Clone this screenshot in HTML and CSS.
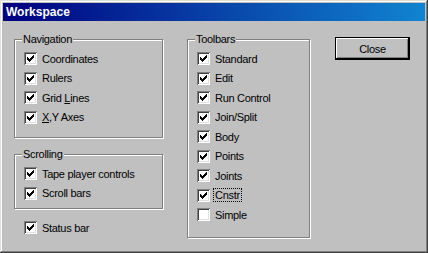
FILE: index.html
```html
<!DOCTYPE html>
<html>
<head>
    <title>Workspace</title>
    <link rel="stylesheet" href="styles.css">
</head>
<body>
    <div class="window">
        <div class="titlebar">Workspace</div>

        <div class="content">
            <!-- Left column: navigation, scrolling, status bar -->
            <div class="col-left">
                <div class="group nav">
                    <span class="legend">Navigation</span>
                    <label class="check"><span class="box"><svg viewBox="0 0 13 13" width="13" height="13"><path d="M3 5h1v3H3zM4 6h1v3H4zM5 7h1v3H5zM6 6h1v3H6zM7 5h1v3H7zM8 4h1v3H8zM9 3h1v3H9z"/></svg></span><span class="text">Coordinates</span></label>
                    <label class="check"><span class="box"><svg viewBox="0 0 13 13" width="13" height="13"><path d="M3 5h1v3H3zM4 6h1v3H4zM5 7h1v3H5zM6 6h1v3H6zM7 5h1v3H7zM8 4h1v3H8zM9 3h1v3H9z"/></svg></span><span class="text">Rulers</span></label>
                    <label class="check"><span class="box"><svg viewBox="0 0 13 13" width="13" height="13"><path d="M3 5h1v3H3zM4 6h1v3H4zM5 7h1v3H5zM6 6h1v3H6zM7 5h1v3H7zM8 4h1v3H8zM9 3h1v3H9z"/></svg></span><span class="text">Grid <u>L</u>ines</span></label>
                    <label class="check"><span class="box"><svg viewBox="0 0 13 13" width="13" height="13"><path d="M3 5h1v3H3zM4 6h1v3H4zM5 7h1v3H5zM6 6h1v3H6zM7 5h1v3H7zM8 4h1v3H8zM9 3h1v3H9z"/></svg></span><span class="text"><u>X</u>,Y Axes</span></label>
                </div>

                <div class="group scroll">
                    <span class="legend">Scrolling</span>
                    <label class="check"><span class="box"><svg viewBox="0 0 13 13" width="13" height="13"><path d="M3 5h1v3H3zM4 6h1v3H4zM5 7h1v3H5zM6 6h1v3H6zM7 5h1v3H7zM8 4h1v3H8zM9 3h1v3H9z"/></svg></span><span class="text">Tape player controls</span></label>
                    <label class="check"><span class="box"><svg viewBox="0 0 13 13" width="13" height="13"><path d="M3 5h1v3H3zM4 6h1v3H4zM5 7h1v3H5zM6 6h1v3H6zM7 5h1v3H7zM8 4h1v3H8zM9 3h1v3H9z"/></svg></span><span class="text">Scroll bars</span></label>
                </div>

                <label class="check status"><span class="box"><svg viewBox="0 0 13 13" width="13" height="13"><path d="M3 5h1v3H3zM4 6h1v3H4zM5 7h1v3H5zM6 6h1v3H6zM7 5h1v3H7zM8 4h1v3H8zM9 3h1v3H9z"/></svg></span><span class="text">Status bar</span></label>
            </div>

            <!-- Toolbars -->
            <div class="group toolbars">
                <span class="legend">Toolbars</span>
                <label class="check"><span class="box"><svg viewBox="0 0 13 13" width="13" height="13"><path d="M3 5h1v3H3zM4 6h1v3H4zM5 7h1v3H5zM6 6h1v3H6zM7 5h1v3H7zM8 4h1v3H8zM9 3h1v3H9z"/></svg></span><span class="text">Standard</span></label>
                <label class="check"><span class="box"><svg viewBox="0 0 13 13" width="13" height="13"><path d="M3 5h1v3H3zM4 6h1v3H4zM5 7h1v3H5zM6 6h1v3H6zM7 5h1v3H7zM8 4h1v3H8zM9 3h1v3H9z"/></svg></span><span class="text">Edit</span></label>
                <label class="check"><span class="box"><svg viewBox="0 0 13 13" width="13" height="13"><path d="M3 5h1v3H3zM4 6h1v3H4zM5 7h1v3H5zM6 6h1v3H6zM7 5h1v3H7zM8 4h1v3H8zM9 3h1v3H9z"/></svg></span><span class="text">Run Control</span></label>
                <label class="check"><span class="box"><svg viewBox="0 0 13 13" width="13" height="13"><path d="M3 5h1v3H3zM4 6h1v3H4zM5 7h1v3H5zM6 6h1v3H6zM7 5h1v3H7zM8 4h1v3H8zM9 3h1v3H9z"/></svg></span><span class="text">Join/Split</span></label>
                <label class="check"><span class="box"><svg viewBox="0 0 13 13" width="13" height="13"><path d="M3 5h1v3H3zM4 6h1v3H4zM5 7h1v3H5zM6 6h1v3H6zM7 5h1v3H7zM8 4h1v3H8zM9 3h1v3H9z"/></svg></span><span class="text">Body</span></label>
                <label class="check"><span class="box"><svg viewBox="0 0 13 13" width="13" height="13"><path d="M3 5h1v3H3zM4 6h1v3H4zM5 7h1v3H5zM6 6h1v3H6zM7 5h1v3H7zM8 4h1v3H8zM9 3h1v3H9z"/></svg></span><span class="text">Points</span></label>
                <label class="check"><span class="box"><svg viewBox="0 0 13 13" width="13" height="13"><path d="M3 5h1v3H3zM4 6h1v3H4zM5 7h1v3H5zM6 6h1v3H6zM7 5h1v3H7zM8 4h1v3H8zM9 3h1v3H9z"/></svg></span><span class="text">Joints</span></label>
                <label class="check"><span class="box"><svg viewBox="0 0 13 13" width="13" height="13"><path d="M3 5h1v3H3zM4 6h1v3H4zM5 7h1v3H5zM6 6h1v3H6zM7 5h1v3H7zM8 4h1v3H8zM9 3h1v3H9z"/></svg></span><span class="text focus">Cnstr</span></label>
                <label class="check"><span class="box"></span><span class="text">Simple</span></label>
            </div>

            <!-- Buttons -->
            <div class="buttons">
                <button class="btn default" type="button">Close</button>
            </div>
        </div>
    </div>
</body>
</html>
```

FILE: styles.css
```css
/* Classic dialog look */

body {
    margin: 0;
    font-family: "Liberation Sans", Arial, sans-serif;
    font-size: 11px;
    color: #000;
}

.window {
    width: 428px;
    height: 253px;
    box-sizing: border-box;
    padding: 3px;
    background-color: #c0c0c0;
    box-shadow: inset -1px -1px #404040, inset 1px 1px #dfdfdf,
                inset -2px -2px #808080, inset 2px 2px #fff;
}

.titlebar {
    height: 18px;
    line-height: 18px;
    padding-left: 3px;
    background: linear-gradient(to right, #000080, #1084d0);
    color: #fff;
    font-size: 12px;
    font-weight: bold;
}

.content {
    display: flex;
    align-items: flex-start;
    padding: 16px 0 0 11px;
}

.col-left {
    width: 149px;
    margin-top: 2px;
    display: flex;
    flex-direction: column;
}

.group {
    position: relative;
    display: flex;
    flex-direction: column;
    border: 1px solid #808080;
    box-shadow: inset 1px 1px #fff, 1px 1px #fff;
    padding: 9px 0 10px 9px;
}

.legend {
    position: absolute;
    top: -7px;
    left: 7px;
    padding: 0 1px;
    line-height: 13px;
    background-color: #c0c0c0;
    letter-spacing: -0.3px;
}

.scroll {
    margin-top: 16px;
    padding-bottom: 5px;
}

.toolbars {
    width: 123px;
    box-sizing: border-box;
    margin: 2px 0 0 24px;
    padding-bottom: 12px;
}

.check {
    display: flex;
    align-items: center;
    height: 19.5px;
}

.status {
    margin: 9px 0 0 10px;
}

.box {
    width: 13px;
    height: 13px;
    flex: none;
    background-color: #fff;
    box-shadow: inset 1px 1px #808080, inset -1px -1px #fff,
                inset 2px 2px #404040, inset -2px -2px #dfdfdf;
}

.box svg {
    display: block;
    shape-rendering: crispEdges;
}

.text {
    display: inline-block;
    margin-left: 4px;
    padding: 0 1px;
    line-height: 12px;
    letter-spacing: -0.3px;
    white-space: nowrap;
}

.focus {
    outline: 1px dotted #000;
}

.buttons {
    margin-left: 25px;
}

.btn {
    width: 75px;
    height: 23px;
    padding: 0;
    font-family: inherit;
    font-size: 11px;
    letter-spacing: -0.3px;
    color: #000;
    background-color: #c0c0c0;
    border: 1px solid #000;
    box-shadow: inset -1px -1px #000, inset 1px 1px #fff, inset -2px -2px #808080;
}
```
